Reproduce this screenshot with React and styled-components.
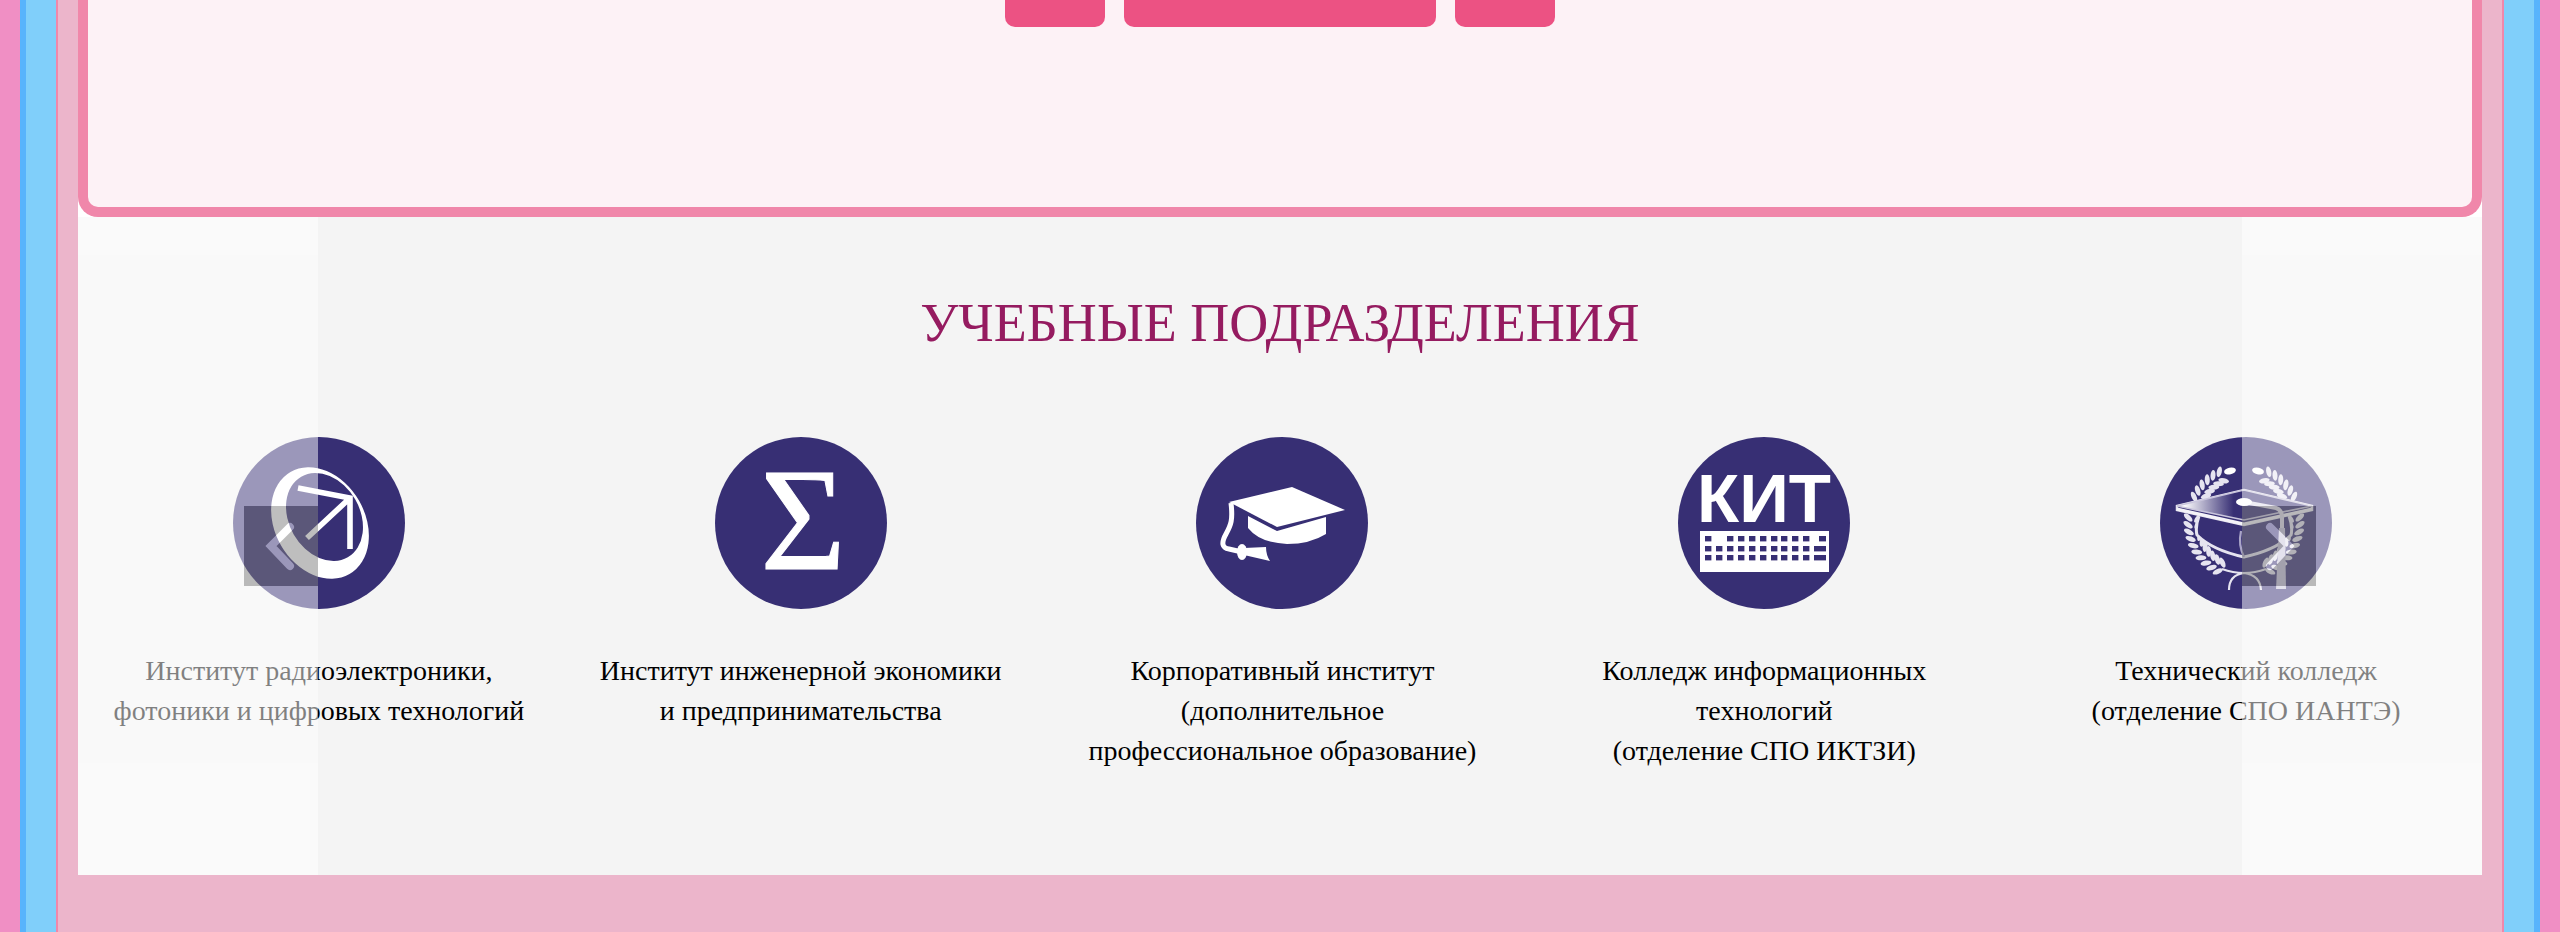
import React from 'react';
import styled, { createGlobalStyle } from 'styled-components';

const NAVY = '#372f74';

const GlobalStyle = createGlobalStyle`
  * { box-sizing: border-box; }
  body {
    margin: 0;
    background: #f08fc4;
    color: #000;
    font-family: "Liberation Serif", "Times New Roman", serif;
  }
`;

const Page = styled.div`
  min-height: 100vh;
  padding: 0 20px;
  display: flex;
`;

const SkyFrame = styled.div`
  flex: 1;
  min-width: 0;
  display: flex;
  padding: 0 30px;
  background: #80cffa;
  border: solid #58b4fc;
  border-width: 0 6px;
`;

const RoseFrame = styled.div`
  flex: 1;
  min-width: 0;
  padding: 0 20px 57px;
  background: #ecb5cb;
  border: solid #f087aa;
  border-width: 0 2px;
`;

const Content = styled.main`
  background: #fff;
`;

const Panel = styled.section`
  padding-bottom: 180px;
  background: #fdf2f6;
  border: 10px solid #f087aa;
  border-top: 0;
  border-radius: 0 0 20px 20px;
`;

const Pager = styled.nav`
  display: flex;
  justify-content: center;
  gap: 19px;
`;

const PagerButton = styled.button`
  width: ${({ $wide }) => ($wide ? 312 : 100)}px;
  height: 27px;
  padding: 0;
  border: 0;
  border-radius: 0 0 10px 10px;
  background: #ec5283;
`;

const Carousel = styled.section`
  position: relative;
  overflow: hidden;
  padding: 74px 0 104px;
  background: #f4f4f4;
`;

const Title = styled.h2`
  margin: 0 0 82px;
  color: #951b60;
  font-size: 54px;
  font-weight: 400;
  line-height: 64px;
  text-align: center;
`;

const Slides = styled.div`
  display: grid;
  grid-auto-flow: column;
  grid-auto-columns: calc(20% + 1px);
`;

const Slide = styled.a`
  display: flex;
  flex-direction: column;
  align-items: center;
  gap: 42px;
  color: inherit;
  text-decoration: none;
`;

const Caption = styled.span`
  font-size: 28px;
  line-height: 40px;
  text-align: center;
  white-space: pre-line;
`;

const Emblem = styled.svg`
  display: block;
  width: 172px;
  height: 172px;
`;

const SlideControl = styled.button`
  position: absolute;
  top: 0;
  bottom: 0;
  ${({ $side }) => $side}: 0;
  width: 10%;
  padding: 0;
  border: 0;
  display: flex;
  align-items: center;
  justify-content: ${({ $side }) => ($side === 'left' ? 'flex-end' : 'flex-start')};
  background: #fff;
  opacity: 0.5;
  cursor: pointer;
`;

const Arrow = styled.svg`
  width: 74px;
  height: 80px;
  background: rgba(0, 0, 0, 0.5);
`;

function Disc({ children }) {
  return (
    <Emblem viewBox="0 0 172 172" aria-hidden="true">
      <circle cx="86" cy="86" r="86" fill={NAVY} />
      {children}
    </Emblem>
  );
}

function OrbitIcon() {
  return (
    <Disc>
      <ellipse cx="87" cy="86" rx="45" ry="59" transform="rotate(-30 87 86)" fill="#fff" />
      <ellipse cx="91.5" cy="80" rx="35.4" ry="46.5" transform="rotate(-30 91.5 80)" fill={NAVY} />
      <path d="M65 51L117 61V112M74 101L117 61" fill="none" stroke="#fff" strokeWidth="5.6" />
    </Disc>
  );
}

function SigmaIcon() {
  return (
    <Disc>
      <text x="88" y="132" textAnchor="middle" fontFamily="Liberation Serif, serif" fontSize="147" fill="#fff" stroke="#fff" strokeWidth="1">
        Σ
      </text>
    </Disc>
  );
}

function CapIcon() {
  return (
    <Disc>
      <g fill="#fff">
        <path d="M33 65L96 50L149 73L81 90Z" />
        <path d="M52 79L81 94L130 80V97Q114 107 91 107Q64 106 52 91Z" />
        <ellipse cx="46" cy="115" rx="5" ry="8" />
        <path d="M48 111L70 110Q70 118 74 124L48 118Z" />
      </g>
      <path d="M35 66C37 83 35 88 30 97C25 106 26 111 33 112L46 115" fill="none" stroke="#fff" strokeWidth="5" />
    </Disc>
  );
}

const KEY_COLUMNS = [27, 38, 49, 60, 71, 82, 93, 103, 114, 125];
const KEY_ROWS = [99, 109, 118];

function KeyboardIcon() {
  return (
    <Disc>
      <text x="86" y="85" textAnchor="middle" fontFamily="Liberation Sans, sans-serif" fontWeight="700" fontSize="69" fill="#fff">
        КИТ
      </text>
      <rect x="22" y="94" width="129" height="41" fill="#fff" />
      {KEY_ROWS.map((y, row) => (
        <g key={y} fill={NAVY}>
          {KEY_COLUMNS.filter((x) => row > 0 || x !== 38).map((x) => (
            <rect key={x} x={x} y={y} width="6.4" height="5.4" />
          ))}
          <rect x={row ? 136 : 141} y={y} width={row ? 12 : 7} height="5.4" />
        </g>
      ))}
    </Disc>
  );
}

// Angles are measured from the foot of the wreath, going up its left branch.
function Branch({ flip }) {
  const leaves = [];
  for (let angle = 28; angle <= 154; angle += 7.4) {
    if (angle > 96 && angle < 112) continue;
    const rad = (angle * Math.PI) / 180;
    [[56, -52], [46, 38]].forEach(([radius, tilt]) => {
      const x = 84 - radius * Math.sin(rad);
      const y = 85 + radius * Math.cos(rad);
      leaves.push(
        <ellipse
          key={`${angle}-${radius}`}
          cx={x}
          cy={y}
          rx="5.4"
          ry="2.5"
          transform={`rotate(${angle + 180 + tilt} ${x} ${y})`}
        />
      );
    });
  }
  return (
    <g transform={flip ? 'translate(168 0) scale(-1 1)' : undefined} fill="#e6e4f0">
      {leaves}
      <ellipse cx="70" cy="34" rx="6" ry="3.3" transform="rotate(-12 70 34)" fill="#fff" />
    </g>
  );
}

function LaurelIcon() {
  return (
    <Disc>
      <defs>
        <linearGradient id="board" x1="0" x2="1" y1="0" y2="0">
          <stop offset="0.05" stopColor="#fff" />
          <stop offset="0.42" stopColor={NAVY} />
        </linearGradient>
      </defs>
      <Branch />
      <Branch flip />
      <path d="M39 79Q35 90 37 98Q52 113 84 120Q116 113 131 98Q133 90 129 79Z" fill={NAVY} />
      <g fill="none" stroke="#e6e4f0" strokeWidth="2.2">
        <path d="M39 79Q35 90 37 98Q52 113 84 120Q116 113 131 98Q133 90 129 79" strokeWidth="3" />
        <path d="M81 94Q78 108 84 120" stroke="#aaa5c8" />
        <path d="M62 132Q84 140 106 132M69 153Q69 138 84 136Q100 138 101 153" />
      </g>
      <path d="M17 69L84 53L152 69V73L84 88L17 73Z" fill={NAVY} stroke="#e6e4f0" strokeWidth="2.5" />
      <path d="M17 69L84 53L152 69L84 83Z" fill="url(#board)" stroke="#c9c5dc" strokeWidth="1.6" />
      <path d="M17 72L84 87L152 72" fill="none" stroke="#f4f3f8" strokeWidth="3" />
      <path d="M84 65L116 71Q122 73 122 80V93" fill="none" stroke="#dedbe9" strokeWidth="4" />
      <path d="M119 91H125L126 152H116Z" fill="#c9c5dc" />
      <ellipse cx="84" cy="65" rx="8" ry="4" fill="#fff" />
    </Disc>
  );
}

const DEPARTMENTS = [
  { icon: OrbitIcon, name: 'Институт радиоэлектроники,\nфотоники и цифровых технологий' },
  { icon: SigmaIcon, name: 'Институт инженерной экономики\nи предпринимательства' },
  { icon: CapIcon, name: 'Корпоративный институт\n(дополнительное\nпрофессиональное образование)' },
  { icon: KeyboardIcon, name: 'Колледж информационных\nтехнологий\n(отделение СПО ИКТЗИ)' },
  { icon: LaurelIcon, name: 'Технический колледж\n(отделение СПО ИАНТЭ)' },
];

export default function App() {
  return (
    <>
      <GlobalStyle />
      <Page>
        <SkyFrame>
          <RoseFrame>
            <Content>
              <Panel>
                <Pager>
                  <PagerButton aria-label="Назад" />
                  <PagerButton $wide aria-label="Подробнее" />
                  <PagerButton aria-label="Вперёд" />
                </Pager>
              </Panel>
              <Carousel>
                <Title>УЧЕБНЫЕ ПОДРАЗДЕЛЕНИЯ</Title>
                <Slides>
                  {DEPARTMENTS.map(({ icon: Icon, name }) => (
                    <Slide key={name} href="#">
                      <Icon />
                      <Caption>{name}</Caption>
                    </Slide>
                  ))}
                </Slides>
                <SlideControl $side="left" aria-label="Предыдущий слайд">
                  <Arrow viewBox="0 0 74 80">
                    <path d="M46 21L27 40L46 60" fill="none" stroke="#fff" strokeWidth="8" strokeLinecap="round" />
                  </Arrow>
                </SlideControl>
                <SlideControl $side="right" aria-label="Следующий слайд">
                  <Arrow viewBox="0 0 74 80">
                    <path d="M28 21L47 40L28 60" fill="none" stroke="#fff" strokeWidth="8" strokeLinecap="round" />
                  </Arrow>
                </SlideControl>
              </Carousel>
            </Content>
          </RoseFrame>
        </SkyFrame>
      </Page>
    </>
  );
}
